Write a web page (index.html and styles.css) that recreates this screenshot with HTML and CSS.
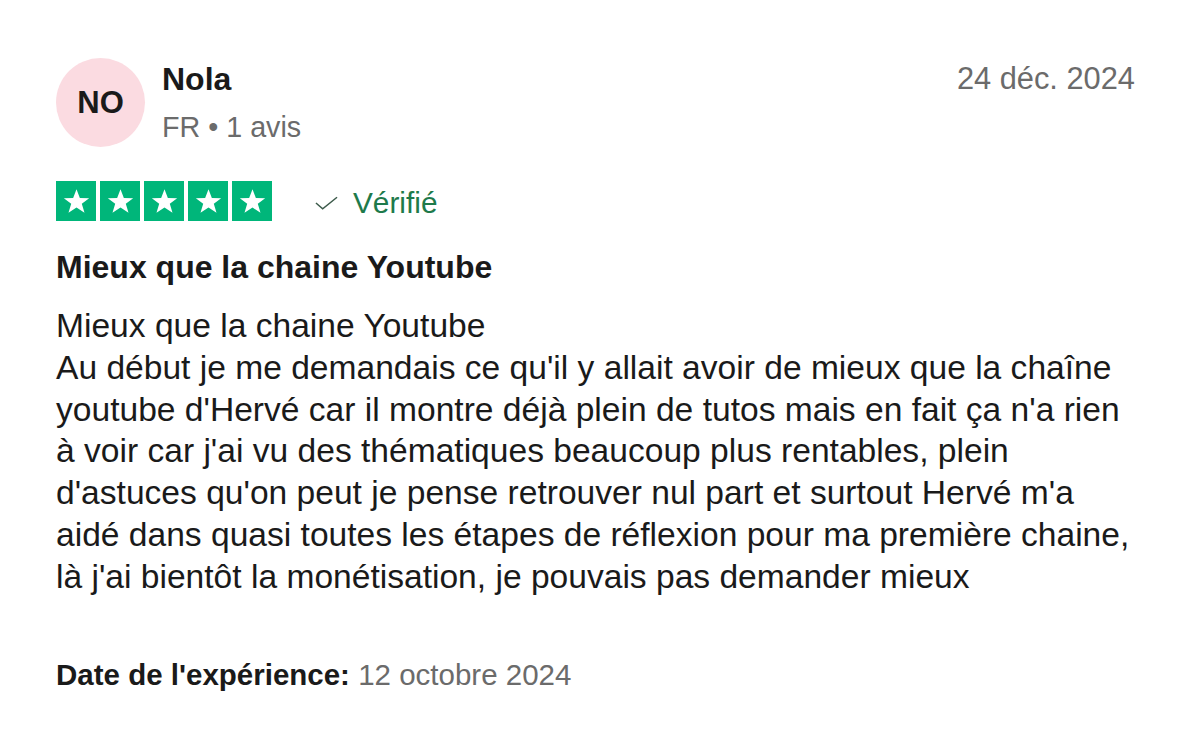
FILE: index.html
```html
<!DOCTYPE html>
<html lang="fr">
<head>
    <meta charset="UTF-8">
    <meta name="viewport" content="width=device-width, initial-scale=1.0">
    <title>Avis - Nola</title>
    <link rel="stylesheet" href="styles.css">
</head>
<body>

<article class="review">
    <header class="review-header">
        <div class="avatar">NO</div>
        <div class="consumer">
            <div class="consumer-name">Nola</div>
            <div class="consumer-meta">FR &bull; 1 avis</div>
        </div>
        <time class="review-date">24 déc. 2024</time>
    </header>

    <div class="rating-row">
        <div class="stars">
            <span class="star"><svg viewBox="0 0 24 24"><polygon points="12,2.5 14.6,9.2 21.8,9.4 16.1,13.8 18.2,20.8 12,16.7 5.8,20.8 7.9,13.8 2.2,9.4 9.4,9.2"/></svg></span>
            <span class="star"><svg viewBox="0 0 24 24"><polygon points="12,2.5 14.6,9.2 21.8,9.4 16.1,13.8 18.2,20.8 12,16.7 5.8,20.8 7.9,13.8 2.2,9.4 9.4,9.2"/></svg></span>
            <span class="star"><svg viewBox="0 0 24 24"><polygon points="12,2.5 14.6,9.2 21.8,9.4 16.1,13.8 18.2,20.8 12,16.7 5.8,20.8 7.9,13.8 2.2,9.4 9.4,9.2"/></svg></span>
            <span class="star"><svg viewBox="0 0 24 24"><polygon points="12,2.5 14.6,9.2 21.8,9.4 16.1,13.8 18.2,20.8 12,16.7 5.8,20.8 7.9,13.8 2.2,9.4 9.4,9.2"/></svg></span>
            <span class="star"><svg viewBox="0 0 24 24"><polygon points="12,2.5 14.6,9.2 21.8,9.4 16.1,13.8 18.2,20.8 12,16.7 5.8,20.8 7.9,13.8 2.2,9.4 9.4,9.2"/></svg></span>
        </div>
        <div class="verified">
            <svg class="check" viewBox="0 0 24 14"><polyline points="1,7 8,13 23,1"/></svg>
            Vérifié
        </div>
    </div>

    <h2 class="review-title">Mieux que la chaine Youtube</h2>

    <p class="review-text">Mieux que la chaine Youtube<br>
    Au début je me demandais ce qu'il y allait avoir de mieux que la chaîne youtube d'Hervé car il montre déjà plein de tutos mais en fait ça n'a rien à voir car j'ai vu des thématiques beaucoup plus rentables, plein d'astuces qu'on peut je pense retrouver nul part et surtout Hervé m'a aidé dans quasi toutes les étapes de réflexion pour ma première chaine, là j'ai bientôt la monétisation, je pouvais pas demander mieux</p>

    <p class="experience"><b>Date de l'expérience:</b> 12 octobre 2024</p>
</article>

</body>
</html>
```
FILE: styles.css
```css
body {
    font-family: 'Liberation Sans', Arial, Helvetica, sans-serif;
    background-color: #fff;
    color: #1a1a1a;
    margin: 0;
    padding: 0;
}

.review {
    padding: 58px 69px 0 56px;
}

.review-header {
    display: flex;
    align-items: flex-start;
}

.avatar {
    width: 89px;
    height: 89px;
    border-radius: 50%;
    background-color: #fbdbe1;
    display: flex;
    justify-content: center;
    align-items: center;
    font-size: 31px;
    font-weight: bold;
    flex-shrink: 0;
}

.consumer {
    margin-left: 17px;
    flex: 1;
}

.consumer-name {
    font-size: 32px;
    font-weight: bold;
    line-height: 36px;
    margin-top: 3px;
}

.consumer-meta {
    font-size: 28.7px;
    color: #6b6b6b;
    line-height: 34px;
    margin-top: 13px;
}

.review-date {
    font-size: 30.8px;
    color: #6b6b6b;
    line-height: 36px;
    margin-top: 3px;
}

.rating-row {
    display: flex;
    align-items: center;
    margin-top: 34px;
}

.stars {
    display: flex;
    gap: 4px;
}

.star {
    width: 40px;
    height: 40px;
    background-color: #00b67a;
    display: flex;
    justify-content: center;
    align-items: center;
}

.star svg {
    width: 31px;
    height: 31px;
    fill: #fff;
}

.verified {
    display: flex;
    align-items: center;
    margin-left: 43px;
    padding-top: 4px;
    font-size: 29.8px;
    color: #1e7a4b;
}

.check {
    width: 23px;
    height: 14px;
    margin-right: 15px;
    fill: none;
    stroke: #3d5b4b;
    stroke-width: 1.6;
}

.review-title {
    font-size: 32px;
    font-weight: bold;
    line-height: 36px;
    margin: 28px 0 0;
}

.review-text {
    font-size: 33.6px;
    line-height: 41.8px;
    margin: 20px 0 0;
}

.experience {
    font-size: 29.5px;
    line-height: 34px;
    color: #6b6b6b;
    margin: 60px 0 0;
}

.experience b {
    color: #1a1a1a;
}
```
